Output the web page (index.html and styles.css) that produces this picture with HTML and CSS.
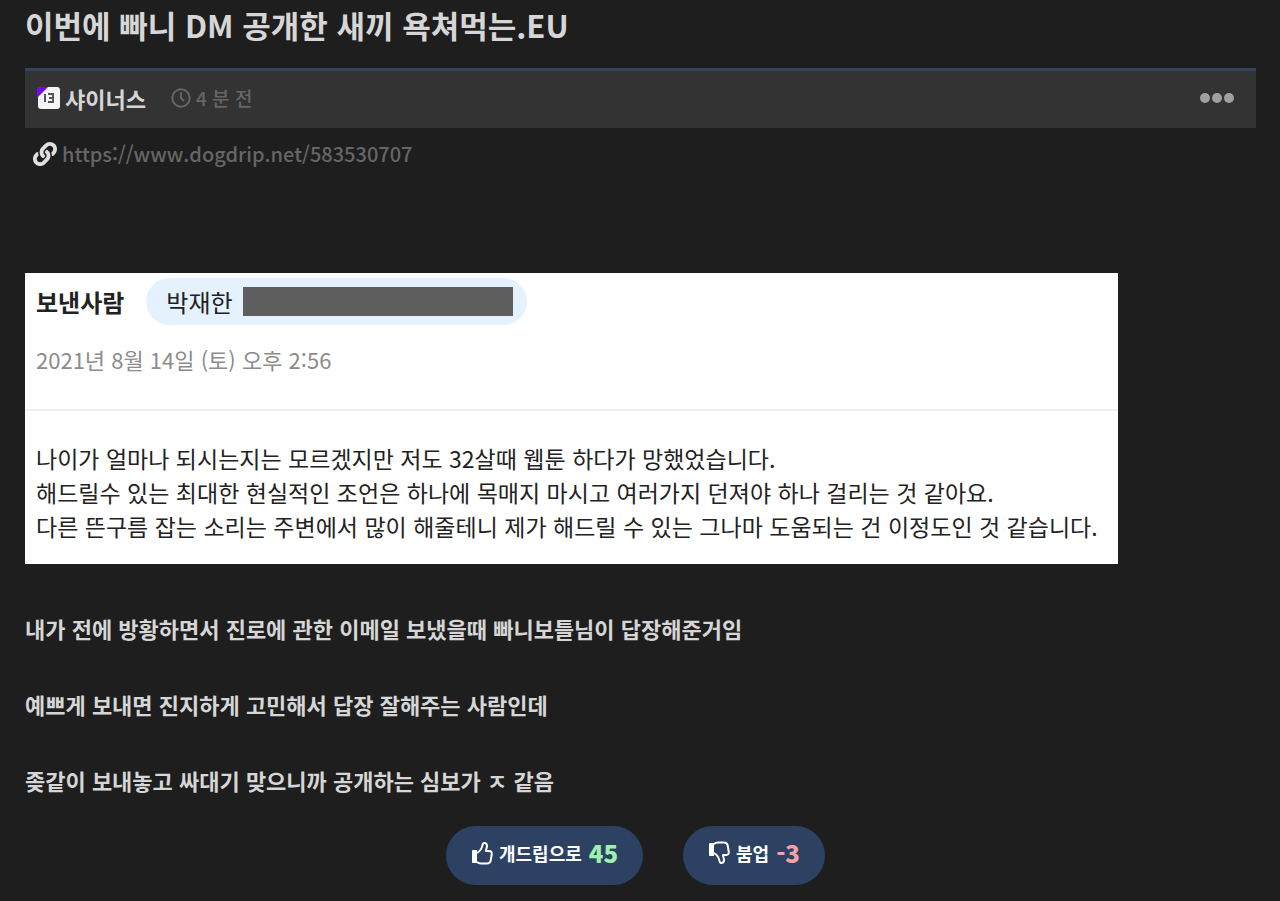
FILE: index.html
```
<!DOCTYPE html>
<html lang="ko">
  <head>
    <meta charset="UTF-8" />
    <meta name="viewport" content="width=device-width, initial-scale=1" />
    <title>이번에 빠니 DM 공개한 새끼 욕쳐먹는.EU</title>
    <link rel="stylesheet" href="styles.css">
  </head>
  <body>
    <article class="post">
      <h1>이번에 빠니 DM 공개한 새끼 욕쳐먹는.EU</h1>

      <header class="post-meta">
        <svg class="level" viewBox="0 0 24 24" aria-hidden="true">
          <rect x="1" y="1" width="22" height="22" rx="3" fill="#f4f4f4" />
          <path d="M0 1h11L0 12z" fill="#7a0be0" />
          <path d="M8 8v8M11 8h5v8h-5M12 12h4" fill="none" stroke="#555" stroke-width="2" />
        </svg>
        <a class="author" href="#">샤이너스</a>
        <svg class="clock" viewBox="0 0 20 20" aria-hidden="true">
          <circle cx="10" cy="10" r="8.700" />
          <path d="M10 4.500V10l3 3" />
        </svg>
        <time>4 분 전</time>
        <button class="more" aria-label="더보기">
          <svg viewBox="0 0 34 10">
            <circle cx="5" cy="5" r="5" />
            <circle cx="17" cy="5" r="5" />
            <circle cx="29" cy="5" r="5" />
          </svg>
        </button>
      </header>

      <div class="source">
        <svg class="link-icon" viewBox="0 0 512 512" aria-hidden="true">
          <path d="M326.612 185.391c59.747 59.809 58.927 155.698.36 214.590-.110.120-.240.250-.360.370l-67.200 67.200c-59.270 59.270-155.699 59.262-214.960 0-59.270-59.260-59.270-155.700 0-214.960l37.106-37.106c9.840-9.840 26.786-3.300 27.294 10.606.648 17.722 3.826 35.527 9.690 52.721 1.986 5.822.567 12.262-3.783 16.612l-13.087 13.087c-28.026 28.026-28.905 73.660-1.155 101.960 28.024 28.579 74.086 28.749 102.325.510l67.200-67.190c28.191-28.191 28.073-73.757 0-101.830-3.701-3.694-7.429-6.564-10.341-8.569a16.037 16.037 0 0 1-6.947-12.606c-.396-10.567 3.348-21.456 11.698-29.806l21.054-21.055c5.521-5.521 14.182-6.199 20.584-1.731a152.482 152.482 0 0 1 20.522 17.197zM467.547 44.449c-59.261-59.262-155.690-59.270-214.960 0l-67.200 67.200c-.120.120-.250.250-.360.370-58.566 58.892-59.387 154.781.360 214.590a152.454 152.454 0 0 0 20.521 17.196c6.402 4.468 15.064 3.789 20.584-1.731l21.054-21.055c8.350-8.350 12.094-19.239 11.698-29.806a16.037 16.037 0 0 0-6.947-12.606c-2.912-2.005-6.640-4.875-10.341-8.569-28.073-28.073-28.191-73.639 0-101.830l67.200-67.190c28.239-28.239 74.300-28.069 102.325.510 27.750 28.300 26.872 73.934-1.155 101.960l-13.087 13.087c-4.350 4.350-5.769 10.790-3.783 16.612 5.864 17.194 9.042 34.999 9.690 52.721.509 13.906 17.454 20.446 27.294 10.606l37.106-37.106c59.271-59.259 59.271-155.699.001-214.959z" />
        </svg>
        <a href="https://www.dogdrip.net/583530707">https://www.dogdrip.net/583530707</a>
      </div>

      <section class="mail">
        <div class="mail-head">
          <div class="sender">
            <strong>보낸사람</strong>
            <span class="pill">박재한<span class="redacted"></span></span>
          </div>
          <p class="date">2021년 8월 14일 (토) 오후 2:56</p>
        </div>
        <p class="mail-body">
          나이가 얼마나 되시는지는 모르겠지만 저도 32살때 웹툰 하다가 망했었습니다.<br />
          해드릴수 있는 최대한 현실적인 조언은 하나에 목매지 마시고 여러가지 던져야 하나 걸리는 것 같아요.<br />
          다른 뜬구름 잡는 소리는 주변에서 많이 해줄테니 제가 해드릴 수 있는 그나마 도움되는 건 이정도인 것 같습니다.
        </p>
      </section>

      <div class="content">
        <p>내가 전에 방황하면서 진로에 관한 이메일 보냈을때 빠니보틀님이 답장해준거임</p>
        <p>예쁘게 보내면 진지하게 고민해서 답장 잘해주는 사람인데</p>
        <p>좆같이 보내놓고 싸대기 맞으니까 공개하는 심보가 ㅈ 같음</p>
      </div>

      <div class="votes">
        <button class="vote">
          <svg viewBox="0 0 22 24" aria-hidden="true">
            <path class="fill" d="M2 9h4v13H2c-1 0-1-1-1-1V10c0-1 1-1 1-1z" />
            <path d="M6 12c3-2 5-4 5.500-8 .300-3 4.500-2.500 4.500 1 0 2-1 3-1 5h3c2.500 0 3 1.500 2.700 3.500l-1 6c-.500 2-1.500 3-3.700 3H10c-2 0-3-.700-4-1.500" />
          </svg>
          <span>개드립으로</span>
          <span class="count up">45</span>
        </button>
        <button class="vote">
          <svg viewBox="0 0 22 24" aria-hidden="true">
            <path class="fill" d="M2 2h4v13H2c-1 0-1-1-1-1V3c0-1 1-1 1-1z" />
            <path d="M6 12c3 2 5 4 5.500 8 .300 3 4.500 2.500 4.500-1 0-2-1-3-1-5h3c2.500 0 3-1.500 2.700-3.500l-1-6c-.500-2-1.500-3-3.700-3H10C8 1.500 7 2.200 6 3" />
          </svg>
          <span>붐업</span>
          <span class="count down">-3</span>
        </button>
      </div>
    </article>
  </body>
</html>
```
FILE: styles.css
```
:root {
  --bg: #1e1e1e;
  --bar: #333;
  --text: #d6d6d6;
  --muted: #666;
  --navy: #2d4263;
}
* {
  box-sizing: border-box;
}
body {
  margin: 0;
  background: var(--bg);
  color: var(--text);
  font-family: 'Noto Sans CJK KR', sans-serif;
  font-size: 22px;
  line-height: 32px;
}
h1,
p {
  margin: 0;
}
a {
  color: inherit;
  text-decoration: none;
}
button {
  border: 0;
  font: inherit;
  color: inherit;
  cursor: pointer;
}
.post {
  padding: 2px 24px 12px 25px;
}
h1 {
  margin-bottom: 20px;
  font-size: 31px;
  line-height: 46px;
  font-weight: 700;
}
.post-meta {
  display: flex;
  align-items: center;
  height: 60px;
  padding: 0 22px 3px 12px;
  background: var(--bar);
  border-top: 3px solid #34445a;
}
.level {
  width: 24px;
  height: 24px;
  margin-right: 4px;
}
.author {
  font-weight: 700;
}
.clock {
  width: 20px;
  height: 20px;
  margin-left: 25px;
  margin-right: 5px;
  fill: none;
  stroke: var(--muted);
  stroke-width: 2;
}
time {
  color: var(--muted);
  font-size: 19px;
  font-weight: 500;
}
.more {
  display: flex;
  margin-left: auto;
  padding: 0;
  background: none;
}
.more svg {
  width: 34px;
  height: 10px;
  fill: #a0a0a0;
}
.source {
  display: flex;
  align-items: center;
  gap: 5px;
  padding: 10px 8px;
  color: var(--muted);
  font-size: 20px;
  font-weight: 500;
}
.link-icon {
  width: 24px;
  height: 24px;
  fill: #e0e0e0;
}
.mail {
  max-width: 1093px;
  margin-top: 93px;
  background: #fff;
  color: #222;
  font-size: 23px;
}
.mail-head {
  padding: 5px 11px 34px;
  border-bottom: 2px solid #f0f0f0;
}
.sender {
  display: flex;
  align-items: center;
  gap: 22px;
  font-size: 24px;
}
.pill {
  display: flex;
  align-items: center;
  gap: 10px;
  height: 47px;
  padding: 0 14px 0 20px;
  border-radius: 24px;
  background: #e5f1fd;
}
.redacted {
  width: 270px;
  height: 29px;
  background: #5e5e5e;
}
.date {
  margin-top: 18px;
  color: #8c8c8c;
  font-size: 22px;
}
.mail-body {
  padding: 30px 11px 21px;
  line-height: 34px;
}
.content {
  display: flex;
  flex-direction: column;
  gap: 44px;
  margin-top: 48px;
  font-weight: 700;
}
.votes {
  display: flex;
  justify-content: center;
  gap: 40px;
  margin-top: 30px;
  padding-right: 10px;
}
.vote {
  display: flex;
  align-items: center;
  height: 59px;
  padding: 0 25px 5px;
  border-radius: 30px;
  background: var(--navy);
  color: #fff;
  font-size: 18px;
  font-weight: 700;
}
.vote svg {
  width: 22px;
  height: 24px;
  margin-right: 6px;
  fill: none;
  stroke: #fff;
  stroke-width: 2;
  stroke-linejoin: round;
}
.vote .fill {
  fill: #fff;
  stroke: none;
}
.count {
  margin-left: 7px;
  font-size: 24px;
  font-weight: 900;
}
.up {
  color: #9ff0ae;
}
.down {
  color: #f3a0a6;
}
```
